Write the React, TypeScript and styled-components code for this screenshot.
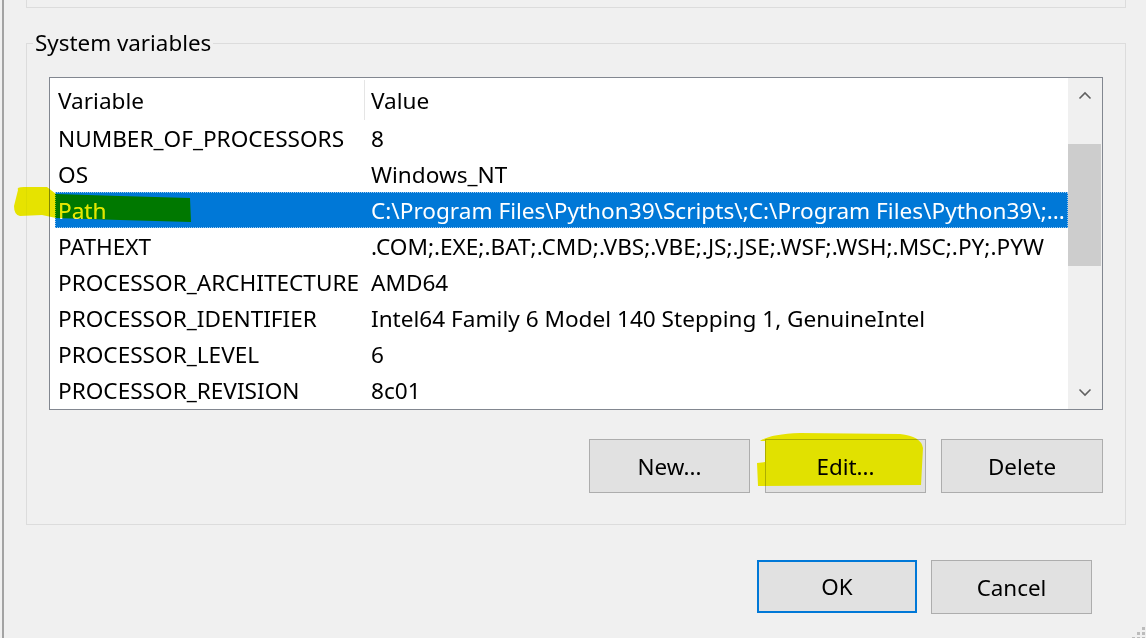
import React from "react";
import styled, { createGlobalStyle } from "styled-components";

const GlobalStyle = createGlobalStyle`
  html, body {
    margin: 0;
    padding: 0;
    background: #f0f0f0;
  }
  body {
    font-family: "Noto Sans", "Open Sans", sans-serif;
    color: #000000;
  }
`;

const Window = styled.div`
  position: relative;
  width: 1146px;
  height: 638px;
  overflow: hidden;
  padding-left: 2px;
  box-sizing: border-box;
  display: flex;
  background: #f0f0f0;
  font-size: 22.6px;
`;

const Frame = styled.div`
  flex: 1;
  border-left: 2px solid #a3a3a3;
  display: flex;
  flex-direction: column;
`;

const PrevGroup = styled.div`
  margin-left: 22px;
  width: 1100px;
  height: 8px;
  box-sizing: border-box;
  border: 1px solid #dcdcdc;
  border-top: none;
`;

const Group = styled.fieldset`
  margin: 21px 0 0 22px;
  width: 1100px;
  box-sizing: border-box;
  border: 1px solid #dcdcdc;
  padding: 0;
  min-width: 0;
`;

const GroupLabel = styled.legend`
  margin-left: 6px;
  padding: 0 2px;
  line-height: 28px;
  font-size: 22.4px;
`;

const GroupBody = styled.div`
  padding: 20px 22px 31px 22px;
  display: flex;
  flex-direction: column;
`;

const ListBox = styled.div`
  height: 333px;
  box-sizing: border-box;
  border: 1px solid #828790;
  background: #ffffff;
  display: flex;
`;

const Table = styled.div`
  flex: 1;
  padding-left: 5px;
  display: flex;
  flex-direction: column;
  min-width: 0;
`;

const Row = styled.div<{ $header?: boolean; $selected?: boolean }>`
  display: grid;
  grid-template-columns: 310px 1fr;
  height: ${(p) => (p.$header ? 42 : 36)}px;
  padding-top: ${(p) => (p.$header ? 2 : 0)}px;
  box-sizing: border-box;
  align-items: center;
  background: ${(p) => (p.$selected ? "#0078d7" : "transparent")};
  color: ${(p) => (p.$selected ? "#ffffff" : "#000000")};
  outline: ${(p) => (p.$selected ? "1px dotted #9cc8ee" : "none")};
  outline-offset: -1px;
`;

const Cell = styled.div<{ $divider?: boolean; $second?: boolean }>`
  padding-left: ${(p) => (p.$second ? 6 : 3)}px;
  height: 100%;
  display: flex;
  align-items: center;
  white-space: nowrap;
  overflow: hidden;
  min-width: 0;
  border-right: ${(p) => (p.$divider ? "1px solid #e5e5e5" : "none")};
  box-sizing: border-box;
`;

const CellText = styled.span`
  overflow: hidden;
  text-overflow: ellipsis;
  white-space: nowrap;
`;

const ScrollBar = styled.div`
  width: 34px;
  background: #f0f0f0;
  display: flex;
  flex-direction: column;
`;

const ArrowBox = styled.div`
  height: 34px;
  display: flex;
  align-items: center;
  justify-content: center;
`;

const Track = styled.div`
  flex: 1;
  padding-top: 32px;
`;

const Thumb = styled.div`
  height: 122px;
  margin-right: 1px;
  background: #cdcdcd;
`;

const ButtonRow = styled.div<{ $gap: number }>`
  display: flex;
  justify-content: flex-end;
  gap: ${(p) => p.$gap}px;
`;

const ActionRow = styled(ButtonRow)`
  margin-top: 29px;
`;

const DialogRow = styled(ButtonRow)`
  margin-top: 35px;
  padding-right: 54px;
`;

const Button = styled.button<{ $primary?: boolean; $w: number }>`
  width: ${(p) => p.$w}px;
  height: ${(p) => (p.$primary ? 53 : 54)}px;
  box-sizing: border-box;
  background: #e1e1e1;
  border: ${(p) => (p.$primary ? "2px solid #0078d7" : "1px solid #adadad")};
  font-family: "Noto Sans", "Open Sans", sans-serif;
  font-size: 22.4px;
  color: #000000;
  padding: 0;
  cursor: default;
`;

const Marker = styled.svg`
  position: absolute;
  left: 0;
  top: 0;
  pointer-events: none;
  mix-blend-mode: darken;
`;

const Grip = styled.svg`
  position: absolute;
  right: 0;
  bottom: 0;
`;

const rows: [string, string][] = [
  ["NUMBER_OF_PROCESSORS", "8"],
  ["OS", "Windows_NT"],
  ["Path", "C:\\Program Files\\Python39\\Scripts\\;C:\\Program Files\\Python39\\;..."],
  ["PATHEXT", ".COM;.EXE;.BAT;.CMD;.VBS;.VBE;.JS;.JSE;.WSF;.WSH;.MSC;.PY;.PYW"],
  ["PROCESSOR_ARCHITECTURE", "AMD64"],
  ["PROCESSOR_IDENTIFIER", "Intel64 Family 6 Model 140 Stepping 1, GenuineIntel"],
  ["PROCESSOR_LEVEL", "6"],
  ["PROCESSOR_REVISION", "8c01"],
];

const Chevron = ({ up }: { up?: boolean }) => (
  <svg width="14" height="9" viewBox="0 0 14 9">
    <path
      d={up ? "M1.5 7.5 L7 2 L12.5 7.5" : "M1.5 1.5 L7 7 L12.5 1.5"}
      fill="none"
      stroke="#606060"
      strokeWidth="1.6"
    />
  </svg>
);

export default function App() {
  return (
    <>
      <GlobalStyle />
      <Window>
        <Frame>
          <PrevGroup />
          <Group>
            <GroupLabel>System variables</GroupLabel>
            <GroupBody>
              <ListBox>
                <Table>
                  <Row $header>
                    <Cell $divider>Variable</Cell>
                    <Cell $second>Value</Cell>
                  </Row>
                  {rows.map(([name, value]) => (
                    <Row key={name} $selected={name === "Path"}>
                      <Cell>{name}</Cell>
                      <Cell $second>
                        <CellText>{value}</CellText>
                      </Cell>
                    </Row>
                  ))}
                </Table>
                <ScrollBar>
                  <ArrowBox>
                    <Chevron up />
                  </ArrowBox>
                  <Track>
                    <Thumb />
                  </Track>
                  <ArrowBox>
                    <Chevron />
                  </ArrowBox>
                </ScrollBar>
              </ListBox>
              <ActionRow $gap={15}>
                <Button $w={161}>New...</Button>
                <Button $w={161}>Edit...</Button>
                <Button $w={162}>Delete</Button>
              </ActionRow>
            </GroupBody>
          </Group>
          <DialogRow $gap={14}>
            <Button $primary $w={160}>OK</Button>
            <Button $w={161}>Cancel</Button>
          </DialogRow>
        </Frame>

        <Marker width="1146" height="638" viewBox="0 0 1146 638">
          <path
            d="M18 190 Q16 187 24 187 L47 187 L56 194 L120 196 L190 198 L191 222 L120 220 L56 218 L42 215 L20 216 Q14 215 14 206 Z"
            fill="#e6e300"
          />
          <path
            d="M760 441 Q770 434 800 433 L900 434 Q921 436 923 448 L921 485 L758 486 L757 463 L765 462 L765 441 Z"
            fill="#e6e300"
          />
        </Marker>

        <Grip width="16" height="12" viewBox="0 0 16 12">
          <rect x="12" y="1" width="3" height="3" fill="#bcbcbc" />
          <rect x="7" y="6" width="3" height="3" fill="#bcbcbc" />
          <rect x="12" y="6" width="3" height="3" fill="#bcbcbc" />
          <rect x="2" y="11" width="3" height="3" fill="#bcbcbc" />
          <rect x="7" y="11" width="3" height="3" fill="#bcbcbc" />
          <rect x="12" y="11" width="3" height="3" fill="#bcbcbc" />
        </Grip>
      </Window>
    </>
  );
}
